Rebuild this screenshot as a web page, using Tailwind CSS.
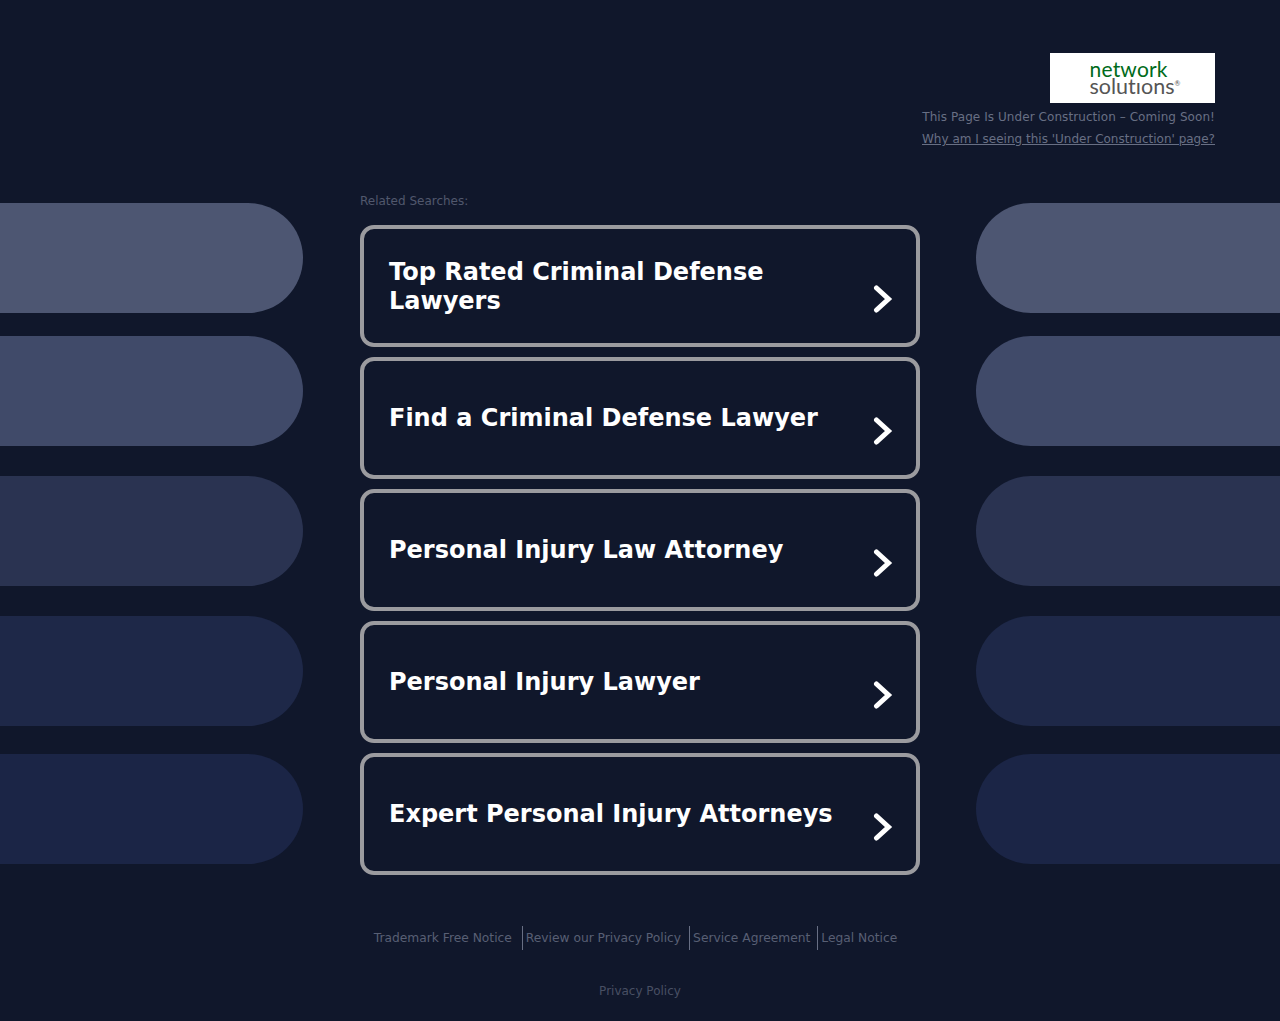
<!DOCTYPE html>
<html lang="en">
<head>
    <meta charset="UTF-8">
    <title>Under Construction</title>
    <script src="https://cdn.jsdelivr.net/npm/@tailwindcss/browser@4"></script>
</head>
<body class="bg-[#10172b] font-['DejaVu_Sans',sans-serif] h-[1021px] overflow-hidden">

    <!-- header -->
    <div class="h-[185px] pt-[53px] pr-[65px] flex flex-col items-end">
        <div class="w-[165px] h-[50px] bg-white flex flex-col items-center pt-[7px] pl-[4px]">
            <div class="font-['Lato',sans-serif] text-[21px] leading-[17px] w-[90px] text-[#006b1a] tracking-[0.2px]">network</div>
            <div class="font-['Lato',sans-serif] text-[21.5px] leading-[13px] w-[90px] text-[#555555] whitespace-nowrap [font-variant-ligatures:none]">solutıons<span class="text-[7px] align-super">®</span></div>
        </div>
        <p class="mt-[6px] text-[12px] leading-[17px] text-[#686f84] tracking-[0.07px]">This Page Is Under Construction – Coming Soon!</p>
        <a href="#" class="mt-[5px] text-[12px] leading-[17px] text-[#686f84] underline">Why am I seeing this 'Under Construction' page?</a>
    </div>

    <div class="flex">
        <!-- left pills -->
        <div class="w-[303px] pt-[18px] flex flex-col">
            <div class="h-[110px] rounded-r-[55px] bg-[#4d5672]"></div>
            <div class="h-[110px] mt-[23px] rounded-r-[55px] bg-[#404a69]"></div>
            <div class="h-[110px] mt-[30px] rounded-r-[55px] bg-[#2a3351]"></div>
            <div class="h-[110px] mt-[30px] rounded-r-[55px] bg-[#1e2848]"></div>
            <div class="h-[110px] mt-[28px] rounded-r-[55px] bg-[#1b2546]"></div>
        </div>

        <!-- searches -->
        <div class="w-[560px] ml-[57px]">
            <p class="h-[40px] pt-[8px] text-[12px] leading-[17px] text-[#51586d]">Related Searches:</p>
            <div class="flex flex-col gap-[10px]">
                <a href="#" class="h-[122px] border-4 border-[#9b9b9f] rounded-[14px] pl-[25px] pr-[23px] flex items-center justify-between text-white">
                    <span class="w-[440px] pt-[2px] text-[24px] leading-[29px] font-bold">Top Rated Criminal Defense Lawyers</span>
                    <svg class="w-[20px] h-[28px] mt-[26px]" viewBox="0 0 20 28" fill="none" stroke="white" stroke-width="5" stroke-linecap="round" stroke-linejoin="miter"><path d="M3.5 3 L15.5 14 L3.5 25"/></svg>
                </a>
                <a href="#" class="h-[122px] border-4 border-[#9b9b9f] rounded-[14px] pl-[25px] pr-[23px] flex items-center justify-between text-white">
                    <span class="text-[24px] leading-[29px] font-bold">Find a Criminal Defense Lawyer</span>
                    <svg class="w-[20px] h-[28px] mt-[26px]" viewBox="0 0 20 28" fill="none" stroke="white" stroke-width="5" stroke-linecap="round" stroke-linejoin="miter"><path d="M3.5 3 L15.5 14 L3.5 25"/></svg>
                </a>
                <a href="#" class="h-[122px] border-4 border-[#9b9b9f] rounded-[14px] pl-[25px] pr-[23px] flex items-center justify-between text-white">
                    <span class="text-[24px] leading-[29px] font-bold">Personal Injury Law Attorney</span>
                    <svg class="w-[20px] h-[28px] mt-[26px]" viewBox="0 0 20 28" fill="none" stroke="white" stroke-width="5" stroke-linecap="round" stroke-linejoin="miter"><path d="M3.5 3 L15.5 14 L3.5 25"/></svg>
                </a>
                <a href="#" class="h-[122px] border-4 border-[#9b9b9f] rounded-[14px] pl-[25px] pr-[23px] flex items-center justify-between text-white">
                    <span class="text-[24px] leading-[29px] font-bold">Personal Injury Lawyer</span>
                    <svg class="w-[20px] h-[28px] mt-[26px]" viewBox="0 0 20 28" fill="none" stroke="white" stroke-width="5" stroke-linecap="round" stroke-linejoin="miter"><path d="M3.5 3 L15.5 14 L3.5 25"/></svg>
                </a>
                <a href="#" class="h-[122px] border-4 border-[#9b9b9f] rounded-[14px] pl-[25px] pr-[23px] flex items-center justify-between text-white">
                    <span class="text-[24px] leading-[29px] font-bold">Expert Personal Injury Attorneys</span>
                    <svg class="w-[20px] h-[28px] mt-[26px]" viewBox="0 0 20 28" fill="none" stroke="white" stroke-width="5" stroke-linecap="round" stroke-linejoin="miter"><path d="M3.5 3 L15.5 14 L3.5 25"/></svg>
                </a>
            </div>

            <!-- footer -->
            <div class="mt-[51px] pr-[9px] flex justify-center text-[12.25px] leading-[24px] text-[#585f74]">
                <a href="#" class="pr-[10px]">Trademark Free Notice</a>
                <a href="#" class="border-l border-[#686f84] pl-[3px] pr-[8px]">Review our Privacy Policy</a>
                <a href="#" class="border-l border-[#686f84] pl-[3px] pr-[7px]">Service Agreement</a>
                <a href="#" class="border-l border-[#686f84] pl-[3px]">Legal Notice</a>
            </div>
            <p class="mt-[28px] text-center text-[12px] leading-[26px] text-[#484f63]">Privacy Policy</p>
        </div>

        <!-- right pills -->
        <div class="w-[304px] ml-[56px] pt-[18px] flex flex-col">
            <div class="h-[110px] rounded-l-[55px] bg-[#4d5672]"></div>
            <div class="h-[110px] mt-[23px] rounded-l-[55px] bg-[#404a69]"></div>
            <div class="h-[110px] mt-[30px] rounded-l-[55px] bg-[#2a3351]"></div>
            <div class="h-[110px] mt-[30px] rounded-l-[55px] bg-[#1e2848]"></div>
            <div class="h-[110px] mt-[28px] rounded-l-[55px] bg-[#1b2546]"></div>
        </div>
    </div>
</body>
</html>
